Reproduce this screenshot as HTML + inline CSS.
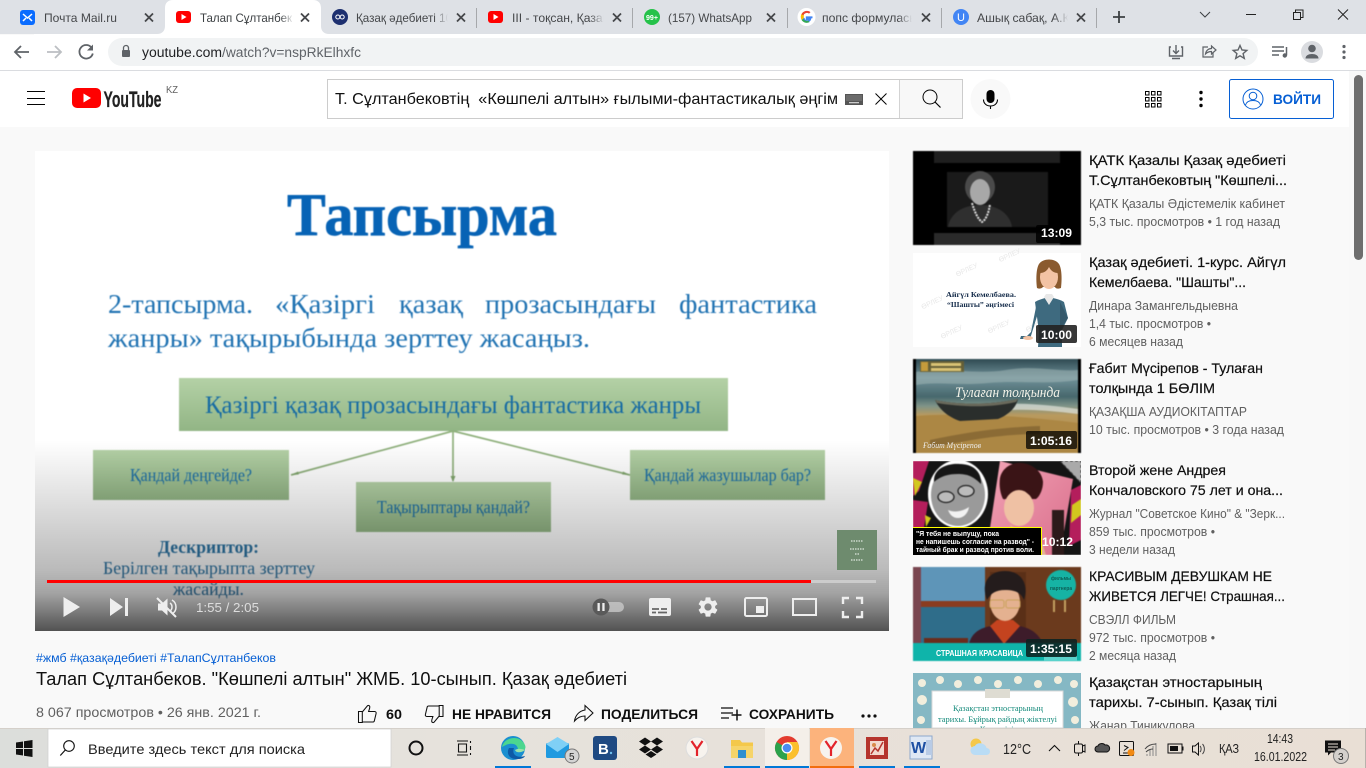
<!DOCTYPE html>
<html lang="ru"><head><meta charset="utf-8"><title>Талап Сұлтанбеков</title>
<style>
html,body{margin:0;padding:0;width:1366px;height:768px;overflow:hidden;background:#f9f9f9}
svg{display:block;position:absolute;left:0;top:0}
text{font-family:"Liberation Sans","Noto Sans CJK SC",sans-serif;white-space:pre}
.s{font-family:"Liberation Serif","Noto Serif CJK SC",serif}
.tab{font-size:12px;fill:#45474a}
.t{font-size:14px;fill:#0f0f0f;stroke:#0f0f0f;stroke-width:.2}
.c{font-size:12.5px;fill:#606060}
.d{font-size:12px;font-weight:bold;fill:#fff}
.b{font-size:14px;font-weight:bold;fill:#0f0f0f}
.sl{fill:#1f72b2}
.x{stroke:#45474a;stroke-width:1.8;fill:none}
.bl{filter:blur(.4px)}
</style></head><body>
<svg width="1366" height="768" viewBox="0 0 1366 768" xmlns="http://www.w3.org/2000/svg">
<defs>
<linearGradient id="vg" x1="0" y1="0" x2="0" y2="1"><stop offset="0" stop-color="#000" stop-opacity="0"/><stop offset=".33" stop-color="#000" stop-opacity=".13"/><stop offset=".68" stop-color="#000" stop-opacity=".27"/><stop offset=".8" stop-color="#000" stop-opacity=".36"/><stop offset="1" stop-color="#000" stop-opacity=".68"/></linearGradient>
<linearGradient id="gb" x1="0" y1="0" x2="0" y2="1"><stop offset="0" stop-color="#b4d1a6"/><stop offset="1" stop-color="#92b585"/></linearGradient>
<linearGradient id="tb" x1="0" y1="0" x2="1" y2="0"><stop offset="0" stop-color="#dcdedb"/><stop offset=".33" stop-color="#e6e2dc"/><stop offset="1" stop-color="#e9dfd5"/></linearGradient>
<linearGradient id="f1" x1="0" x2="1"><stop offset="0" stop-color="#dee1e6" stop-opacity="0"/><stop offset="1" stop-color="#dee1e6"/></linearGradient>
<linearGradient id="f2" x1="0" x2="1"><stop offset="0" stop-color="#fff" stop-opacity="0"/><stop offset="1" stop-color="#fff"/></linearGradient>
<linearGradient id="sky" x1="0" y1="0" x2="0" y2="1"><stop offset="0" stop-color="#2f4a52"/><stop offset=".2" stop-color="#71929a"/><stop offset=".4" stop-color="#47686d"/><stop offset=".5" stop-color="#7f9488"/><stop offset=".6" stop-color="#b99a5e"/><stop offset="1" stop-color="#a67d3c"/></linearGradient>
<linearGradient id="pink" x1="0" y1="0" x2="1" y2="1"><stop offset="0" stop-color="#f2a3b5"/><stop offset="1" stop-color="#d96d8b"/></linearGradient>
<clipPath id="cv"><rect x="35" y="151" width="854" height="480"/></clipPath>
<clipPath id="c4"><rect x="913" y="461" width="168" height="94"/></clipPath>
</defs>

<!-- page -->
<rect width="1366" height="768" fill="#f9f9f9"/>

<!-- chrome tab strip -->
<rect width="1366" height="34" fill="#dee1e6"/>
<path d="M157 34c5 0 8-3 8-8V8c0-5 3-8 8-8h140c5 0 8 3 8 8v18c0 5 3 8 8 8z" fill="#fff"/>
<rect x="34" y="34" width="1332" height="1" fill="#fff"/>

<!-- tab1 -->
<rect x="20" y="10" width="15" height="15" rx="3" fill="#0a6cff"/>
<path d="M23 14l4.500 4 4.500-4M23 21l3-3M32 21l-3-3" stroke="#fff" stroke-width="1.500" fill="none"/>
<text x="44" y="22" class="tab" textLength="73" lengthAdjust="spacingAndGlyphs">Почта Mail.ru</text>
<path class="x" d="M145 13.500l8 8M153 13.500l-8 8"/>

<!-- tab2 -->
<rect x="176" y="11" width="15" height="12" rx="3" fill="#f00"/><path d="M181.500 14v6l5-3z" fill="#fff"/>
<text x="200" y="22" class="tab" textLength="92" lengthAdjust="spacingAndGlyphs" style="fill:#3c4043">Талап Сұлтанбек</text>
<rect x="280" y="8" width="14" height="20" fill="url(#f2)"/>
<path class="x" d="M301 13.500l8 8M309 13.500l-8 8"/>

<!-- tab3 -->
<circle cx="340" cy="17" r="8" fill="#1d2f6f"/><circle cx="337.800" cy="17" r="2" fill="none" stroke="#fff" stroke-width="1"/><circle cx="342.200" cy="17" r="2" fill="none" stroke="#fff" stroke-width="1"/>
<text x="356" y="22" class="tab" textLength="96" lengthAdjust="spacingAndGlyphs">Қазақ әдебиеті 10</text>
<rect x="434" y="8" width="14" height="20" fill="url(#f1)"/><rect x="448" y="8" width="8" height="20" fill="#dee1e6"/>
<path class="x" d="M457 13.500l8 8M465 13.500l-8 8"/>
<rect x="476" y="8" width="1" height="20" fill="#a6a8ab"/>

<!-- tab4 -->
<rect x="488" y="11" width="15" height="12" rx="3" fill="#f00"/><path d="M493.500 14v6l5-3z" fill="#fff"/>
<text x="512" y="22" class="tab" textLength="96" lengthAdjust="spacingAndGlyphs">III - тоқсан, Қазақ</text>
<rect x="590" y="8" width="14" height="20" fill="url(#f1)"/><rect x="604" y="8" width="8" height="20" fill="#dee1e6"/>
<path class="x" d="M613 13.500l8 8M621 13.500l-8 8"/>
<rect x="632" y="8" width="1" height="20" fill="#a6a8ab"/>

<!-- tab5 -->
<circle cx="652" cy="17" r="8" fill="#25c24a"/><text x="646" y="20" style="font-size:7.500px;font-weight:bold;fill:#fff" textLength="12" lengthAdjust="spacingAndGlyphs">99+</text>
<text x="668" y="22" class="tab" textLength="84" lengthAdjust="spacingAndGlyphs">(157) WhatsApp</text>
<path class="x" d="M767 13.500l8 8M775 13.500l-8 8"/>
<rect x="787" y="8" width="1" height="20" fill="#a6a8ab"/>

<!-- tab6 G -->
<circle cx="806.500" cy="17" r="9" fill="#fff"/>
<path d="M812.500 17.300h-5.800v1.900h3.500c-.4 1.300-1.600 2.100-3.100 2.100-1.900 0-3.400-1.500-3.400-3.400" fill="none" stroke="#4285f4" stroke-width="1.800"/>
<path d="M803.800 11.700a5.800 5.800 0 0 0-2.200 8l2.200-1.600" fill="#fbbc05" stroke="none"/>
<path d="M801.500 14.400a5.900 5.900 0 0 1 9-2.300l-1.500 1.500a3.800 3.800 0 0 0-5.700 1.700z" fill="#ea4335"/>
<path d="M801.500 19.800a5.900 5.900 0 0 0 8 2.300l-1.400-1.600a3.800 3.800 0 0 1-4.900-1.600z" fill="#34a853"/>
<text x="822" y="22" class="tab" textLength="96" lengthAdjust="spacingAndGlyphs">попс формуласы</text>
<rect x="898" y="8" width="14" height="20" fill="url(#f1)"/><rect x="912" y="8" width="8" height="20" fill="#dee1e6"/>
<path class="x" d="M922 13.500l8 8M930 13.500l-8 8"/>
<rect x="941" y="8" width="1" height="20" fill="#a6a8ab"/>

<!-- tab7 -->
<circle cx="961" cy="17" r="8" fill="#4285f4"/><text x="957" y="21" style="font-size:11px;fill:#fff">U</text>
<text x="977" y="22" class="tab" textLength="96" lengthAdjust="spacingAndGlyphs">Ашық сабақ, А.Қ.</text>
<rect x="1054" y="8" width="14" height="20" fill="url(#f1)"/><rect x="1068" y="8" width="8" height="20" fill="#dee1e6"/>
<path class="x" d="M1077 13.500l8 8M1085 13.500l-8 8"/>
<rect x="1096" y="8" width="1" height="20" fill="#a6a8ab"/>
<path d="M1119 11v12M1113 17h12" stroke="#3c4043" stroke-width="1.800" fill="none"/>

<!-- window controls -->
<path d="M1200 12l5 5 5-5" stroke="#3c4043" fill="none"/>
<path d="M1246 14.500h10" stroke="#222" stroke-width="1"/>
<path d="M1293.500 12.500h7v7h-7zM1295.500 12.500v-2.500h7.500v7.500h-2.500" stroke="#222" fill="none"/>
<path d="M1338 9.500l10 10M1348 9.500l-10 10" stroke="#222" fill="none"/>

<!-- toolbar -->
<rect y="35" width="1366" height="35" fill="#fff"/>
<rect y="70" width="1366" height="1" fill="#dadce0"/>
<rect x="108" y="38" width="1150" height="28" rx="14" fill="#f1f3f4"/>
<path d="M29 52H15.500M21 46l-6 6 6 6" stroke="#5f6368" stroke-width="1.800" fill="none"/>
<path d="M47 52h13.500M55 46l6 6-6 6" stroke="#bcbfc3" stroke-width="1.800" fill="none"/>
<path d="M91.500 47.500a6.800 6.800 0 1 0 1.300 6" stroke="#5f6368" stroke-width="1.800" fill="none"/><path d="M93 44.500v6h-6z" fill="#5f6368"/>
<path d="M123.500 50v-2a2.500 2.500 0 0 1 5 0v2" stroke="#5f6368" stroke-width="1.300" fill="none"/><rect x="122" y="50" width="8" height="7" rx="1" fill="#5f6368"/>
<text x="142" y="57" style="font-size:13.500px;fill:#202124" textLength="80" lengthAdjust="spacingAndGlyphs">youtube.com</text>
<text x="222" y="57" style="font-size:13.500px;fill:#5f6368" textLength="139" lengthAdjust="spacingAndGlyphs">/watch?v=nspRkElhxfc</text>
<!-- right toolbar icons -->
<path d="M1171 47h-1.500v9h13v-9h-1.500M1176 45v8M1173 50.500l3 3 3-3M1172 58.500h8" stroke="#5f6368" stroke-width="1.400" fill="none"/>
<path d="M1208 47h-5v10h10v-4M1205.500 54c.5-3.500 3-5.500 6-5.500v-2.500l4.500 4-4.500 4v-2.500c-2.500 0-4.500 1-6 2.500z" stroke="#5f6368" stroke-width="1.200" fill="none"/>
<path d="M1240 45.500l2 4.500 4.800.4-3.700 3.200 1.200 4.800-4.300-2.600-4.300 2.600 1.200-4.800-3.700-3.200 4.800-.4z" stroke="#5f6368" stroke-width="1.400" fill="none"/>
<path d="M1272 47h12M1272 51h12M1272 55h7" stroke="#5f6368" stroke-width="1.400"/><path d="M1286.500 47v8.500" stroke="#5f6368" stroke-width="1.500"/><circle cx="1284.800" cy="55.500" r="2.200" fill="#5f6368"/>
<circle cx="1312" cy="52" r="11" fill="#dadce0"/><circle cx="1312" cy="48.500" r="3.800" fill="#5f6368"/><path d="M1305.500 58.500c0-3 3-4.500 6.500-4.500s6.500 1.500 6.500 4.500z" fill="#5f6368"/>
<circle cx="1344" cy="46.500" r="1.600" fill="#5f6368"/><circle cx="1344" cy="52" r="1.600" fill="#5f6368"/><circle cx="1344" cy="57.500" r="1.600" fill="#5f6368"/>

<!-- yt header -->
<rect y="71" width="1349" height="56" fill="#fff"/>
<path d="M27 91.500h18M27 98.500h18M27 104.500h18" stroke="#030303" stroke-width="1"/>
<rect x="72" y="88" width="29" height="20" rx="5" fill="#f00"/><path d="M83.500 93.500v9l7.500-4.500z" fill="#fff"/>
<text x="103.500" y="107" style="font-size:22px;font-weight:bold;fill:#212121;stroke:#212121;stroke-width:.2" textLength="58" lengthAdjust="spacingAndGlyphs">YouTube</text>
<text x="166" y="93" style="font-size:10px;fill:#606060" textLength="12" lengthAdjust="spacingAndGlyphs">KZ</text>

<!-- search -->
<rect x="327.500" y="79.500" width="635" height="39" fill="#fff" stroke="#ccc"/>
<rect x="900" y="80" width="62" height="38" fill="#f8f8f8"/><rect x="899" y="80" width="1" height="38" fill="#d3d3d3"/>
<text x="335" y="104" style="font-size:16px;fill:#111" textLength="503" lengthAdjust="spacingAndGlyphs">Т. Сұлтанбековтің  «Көшпелі алтын» ғылыми-фантастикалық әңгім</text>
<rect x="845" y="94" width="18" height="11" fill="#555"/><path d="M846.500 96h15M846.500 98h15M846.500 100h15" stroke="#ccc" stroke-width=".8" stroke-dasharray="1 1"/><rect x="849" y="102" width="10" height="1.300" fill="#ccc"/>
<path d="M875.500 93.500l11 11M886.500 93.500l-11 11" stroke="#030303" stroke-width="1"/>
<circle cx="930" cy="97" r="7" fill="none" stroke="#030303" stroke-width="1"/><path d="M935 102l5.500 5.500" stroke="#030303" stroke-width="1.200"/>
<circle cx="990.500" cy="99" r="20" fill="#f9f9f9"/>
<rect x="986.500" y="90" width="8" height="13" rx="4" fill="#030303"/><path d="M983.500 99.500c0 4 3 6.500 7 6.500s7-2.500 7-6.500M990.500 106v3" stroke="#030303" stroke-width="1.100" fill="none"/>

<!-- grid / dots / login -->
<g fill="none" stroke="#030303" stroke-width="1"><path d="M1145.500 91.500h3.500v3.500h-3.500zM1151.500 91.500h3.500v3.500h-3.500zM1157.500 91.500h3.500v3.500h-3.500zM1145.500 97.500h3.500v3.500h-3.500zM1151.500 97.500h3.500v3.500h-3.500zM1157.500 97.500h3.500v3.500h-3.500zM1145.500 103.500h3.500v3.500h-3.500zM1151.500 103.500h3.500v3.500h-3.500zM1157.500 103.500h3.500v3.500h-3.500z"/></g>
<circle cx="1201" cy="92.500" r="1.700" fill="#030303"/><circle cx="1201" cy="99" r="1.700" fill="#030303"/><circle cx="1201" cy="105.500" r="1.700" fill="#030303"/>
<rect x="1229.500" y="79.500" width="104" height="39" rx="2" fill="#fff" stroke="#065fd4"/>
<circle cx="1253" cy="99" r="10" fill="none" stroke="#065fd4" stroke-width="1"/><circle cx="1253" cy="96" r="3.800" fill="none" stroke="#065fd4"/><path d="M1245.500 105c1-3.500 4-4.500 7.500-4.500s6.500 1 7.500 4.500" fill="none" stroke="#065fd4"/>
<text x="1273" y="104" style="font-size:14px;font-weight:bold;fill:#065fd4" textLength="48" lengthAdjust="spacingAndGlyphs">ВОЙТИ</text>

<!-- scrollbar -->
<rect x="1349" y="71" width="17" height="657" fill="#f8f8f8"/>
<rect x="1354" y="75" width="9" height="185" rx="4.500" fill="#6e6e6e"/>

<!-- video -->
<g clip-path="url(#cv)">
<rect x="35" y="151" width="854" height="480" fill="#fff"/>
<g class="bl">
<text class="s" x="287" y="235" style="font-size:60px;font-weight:bold;fill:#0763b5;stroke:#0763b5;stroke-width:.7" textLength="270" lengthAdjust="spacingAndGlyphs">Тапсырма</text>
<text class="s sl" style="font-size:27px" x="108" y="313" textLength="145" lengthAdjust="spacingAndGlyphs">2-тапсырма.</text>
<text class="s sl" style="font-size:27px" x="275" y="313" textLength="100" lengthAdjust="spacingAndGlyphs">«Қазіргі</text>
<text class="s sl" style="font-size:27px" x="399" y="313" textLength="64" lengthAdjust="spacingAndGlyphs">қазақ</text>
<text class="s sl" style="font-size:27px" x="485" y="313" textLength="171" lengthAdjust="spacingAndGlyphs">прозасындағы</text>
<text class="s sl" style="font-size:27px" x="679" y="313" textLength="138" lengthAdjust="spacingAndGlyphs">фантастика</text>
<text class="s sl" style="font-size:27px" x="108" y="347" textLength="482" lengthAdjust="spacingAndGlyphs">жанры» тақырыбында зерттеу жасаңыз.</text>
<rect x="179" y="378" width="549" height="53" fill="url(#gb)"/>
<text class="s" x="205" y="413" style="font-size:25px;fill:#166ba3" textLength="496" lengthAdjust="spacingAndGlyphs">Қазіргі қазақ прозасындағы фантастика жанры</text>
<path d="M453 431L291 475M453 431V481M453 431L630 475" stroke="#8fb07c" stroke-width="1.700" fill="none"/>
<path d="M291 475l7-3.500.8 3zM453 482l-2.500-6h5zM630 475l-7-3.500-.8 3z" fill="#7fa46c"/>
<rect x="93" y="450" width="196" height="50" fill="url(#gb)"/>
<rect x="356" y="482" width="195" height="50" fill="url(#gb)"/>
<rect x="630" y="450" width="195" height="50" fill="url(#gb)"/>
<text class="s" x="130" y="481" style="font-size:18px;fill:#1b6ea6" textLength="122" lengthAdjust="spacingAndGlyphs">Қандай деңгейде?</text>
<text class="s" x="377" y="513" style="font-size:18px;fill:#1b6ea6" textLength="153" lengthAdjust="spacingAndGlyphs">Тақырыптары қандай?</text>
<text class="s" x="644" y="481" style="font-size:18px;fill:#1b6ea6" textLength="167" lengthAdjust="spacingAndGlyphs">Қандай жазушылар бар?</text>
<text class="s" x="158" y="553" style="font-size:18px;font-weight:bold;fill:#2b74a4" textLength="101" lengthAdjust="spacingAndGlyphs">Дескриптор:</text>
<text class="s" x="103" y="574" style="font-size:18px;fill:#2b74a4" textLength="212" lengthAdjust="spacingAndGlyphs">Берілген тақырыпта зерттеу</text>
<text class="s" x="173" y="595" style="font-size:18px;fill:#2b74a4" textLength="71" lengthAdjust="spacingAndGlyphs">жасайды.</text>
</g>
<!-- gradient -->
<rect x="35" y="440" width="854" height="191" fill="url(#vg)"/>
<!-- watermark -->
<rect x="837" y="530" width="40" height="40" fill="#6e8b6e"/>
<path d="M851 541h12M850 549h14M855 554h4M851 560h12" stroke="#dfe8df" stroke-width="1.200" stroke-dasharray="1.500 1" fill="none"/>
<!-- progress -->
<rect x="47" y="580" width="829" height="3" fill="#ccc"/><rect x="47" y="580" width="764" height="3" fill="#f00"/>
<!-- controls -->
<path d="M63.500 597v20l16.500-10z" fill="#eee"/>
<path d="M110 598v18l13-9zM125 598h3v18h-3z" fill="#eee"/>
<path d="M158 603.500v7h4l5.500 5v-17l-5.500 5z" fill="#eee"/><path d="M170 603c1.500 1 2 2.500 2 4s-.5 3-2 4M172 600c2.500 1.500 4 4 4 7s-1.500 5.500-4 7" stroke="#eee" stroke-width="1.500" fill="none"/><path d="M157 598l19 19" stroke="#eee" stroke-width="2"/>
<text x="196" y="612" style="font-size:13px;fill:#ddd" textLength="63" lengthAdjust="spacingAndGlyphs">1:55 / 2:05</text>
<rect x="594" y="602" width="30" height="10" rx="5" fill="#c8c8c8" opacity=".8"/>
<circle cx="601" cy="607" r="8.500" fill="#5a5a5a"/><rect x="597.500" y="603" width="2.300" height="8" fill="#eee"/><rect x="602.300" y="603" width="2.300" height="8" fill="#eee"/>
<rect x="649" y="598" width="22" height="18" rx="2" fill="#eee"/><path d="M652 609h7M661 609h6M652 612.500h4M658 612.500h9" stroke="#666" stroke-width="1.800"/>
<g transform="translate(696 595)"><path fill="#eee" d="M19.140 12.940c.04-.3.060-.61.060-.94 0-.32-.02-.64-.07-.94l2.030-1.580c.18-.14.230-.41.120-.61l-1.920-3.320c-.12-.22-.37-.29-.59-.22l-2.390.96c-.5-.38-1.030-.7-1.620-.94l-.36-2.540c-.04-.24-.24-.41-.48-.41h-3.840c-.24 0-.43.170-.47.410l-.36 2.540c-.59.240-1.130.570-1.620.94l-2.390-.96c-.22-.08-.47 0-.59.220L2.740 8.870c-.12.210-.08.470.120.610l2.030 1.580c-.05.3-.09.630-.09.94s.02.640.07.940l-2.030 1.580c-.18.140-.23.410-.12.610l1.920 3.320c.12.220.37.290.59.220l2.390-.96c.5.380 1.030.7 1.620.94l.36 2.540c.05.240.24.410.48.410h3.840c.24 0 .44-.17.47-.41l.36-2.540c.59-.24 1.130-.56 1.620-.94l2.390.96c.22.080.47 0 .59-.22l1.920-3.320c.12-.22.070-.47-.12-.61l-2.010-1.580zM12 15.600c-1.980 0-3.600-1.620-3.600-3.600s1.620-3.600 3.600-3.600 3.600 1.620 3.600 3.600-1.620 3.600-3.600 3.600z"/></g>
<rect x="745" y="598" width="22" height="18" rx="1.500" fill="none" stroke="#eee" stroke-width="2"/><rect x="756" y="606" width="8" height="7" fill="#eee"/>
<rect x="793" y="599" width="23" height="16" fill="none" stroke="#eee" stroke-width="2"/>
<path d="M843 604v-6h6M856 598h6v6M862 611v6h-6M849 617h-6v-6" stroke="#eee" stroke-width="2.400" fill="none"/>
</g>

<!-- below video -->
<text x="36" y="662" style="font-size:12px;fill:#065fd4" textLength="240" lengthAdjust="spacingAndGlyphs">#жмб #қазақәдебиеті #ТалапСұлтанбеков</text>
<text x="36" y="685" style="font-size:18px;fill:#0f0f0f" textLength="591" lengthAdjust="spacingAndGlyphs">Талап Сұлтанбеков. "Көшпелі алтын" ЖМБ. 10-сынып. Қазақ әдебиеті</text>
<text x="36" y="717" style="font-size:14px;fill:#606060" textLength="225" lengthAdjust="spacingAndGlyphs">8 067 просмотров • 26 янв. 2021 г.</text>
<path d="M358.500 711.500h3.800v11h-3.800zM362.300 712l5-6c.5-1 2.500-.8 2.500 1 0 1.500-.8 3-1.200 4.500h6c1.200 0 1.800 1 1.500 2l-1.800 7.500c-.2.800-.8 1-1.500 1h-10.500z" fill="none" stroke="#0f0f0f" stroke-width="1.050"/>
<text x="386" y="719" class="b" textLength="16" lengthAdjust="spacingAndGlyphs">60</text>
<path d="M443 716.500h-3.800v-11h3.800zM439.200 716l-5 6c-.5 1-2.500.8-2.500-1 0-1.500.8-3 1.200-4.500h-6c-1.200 0-1.800-1-1.500-2l1.800-7.500c.2-.8.8-1 1.500-1h10.500z" fill="none" stroke="#0f0f0f" stroke-width="1.050"/>
<text x="452" y="719" class="b" textLength="99" lengthAdjust="spacingAndGlyphs">НЕ НРАВИТСЯ</text>
<path d="M585 705.500l8 7.500-8 7.500v-4.500c-4 0-7.500 1.500-10.500 5 .8-5.500 4.500-10 10.500-11z" fill="none" stroke="#0f0f0f" stroke-width="1.050"/>
<text x="601" y="719" class="b" textLength="97" lengthAdjust="spacingAndGlyphs">ПОДЕЛИТЬСЯ</text>
<path d="M721 708h12M721 713h12M721 718h8" stroke="#0f0f0f" stroke-width="1.200"/><path d="M737 709.500v11M731.500 715h10" stroke="#0f0f0f" stroke-width="1.500"/>
<text x="749" y="719" class="b" textLength="85" lengthAdjust="spacingAndGlyphs">СОХРАНИТЬ</text>
<circle cx="863" cy="716" r="1.600" fill="#0f0f0f"/><circle cx="869" cy="716" r="1.600" fill="#0f0f0f"/><circle cx="875" cy="716" r="1.600" fill="#0f0f0f"/>

<!-- thumbnails -->
<!-- 1 -->
<g class="bl">
<rect x="913" y="151" width="168" height="94" fill="#000"/>
<rect x="934" y="151" width="126" height="12" fill="#1f1f1f"/><rect x="934" y="233" width="126" height="12" fill="#2a2a2a"/>
<rect x="947" y="172" width="101" height="55" fill="#1a1a1a"/>
<ellipse cx="980" cy="187" rx="15" ry="16" fill="#4a4a4a"/>
<ellipse cx="980" cy="192" rx="10" ry="13" fill="#a8a8a8"/>
<path d="M948 227c2-13 14-22 32-22s30 9 32 22z" fill="#2f2f2f"/>
<path d="M972 203c3 10 6 16 10 19 4-2 7-10 8-18" fill="none" stroke="#e0e0e0" stroke-width="2" stroke-dasharray="2 1"/>
</g>
<rect x="1036" y="225" width="41" height="18" rx="2" fill="#000" opacity=".85"/>
<text x="1041" y="237" class="d" textLength="31" lengthAdjust="spacingAndGlyphs">13:09</text>
<!-- 2 -->
<rect x="913" y="253" width="168" height="94" fill="#fff"/>
<g transform="rotate(-25 990 300)"><text x="925" y="280" style="font-size:7px;fill:#e8e8e8">ӨРЛЕУ</text><text x="970" y="265" style="font-size:7px;fill:#e8e8e8">ӨРЛЕУ</text><text x="1015" y="270" style="font-size:7px;fill:#e8e8e8">ӨРЛЕУ</text><text x="930" y="315" style="font-size:7px;fill:#e8e8e8">ӨРЛЕУ</text><text x="975" y="330" style="font-size:7px;fill:#e8e8e8">ӨРЛЕУ</text><text x="1010" y="345" style="font-size:7px;fill:#e8e8e8">ӨРЛЕУ</text></g>
<text class="s" x="946" y="297" style="font-size:7.500px;font-weight:bold;fill:#152c4a" textLength="70" lengthAdjust="spacingAndGlyphs">Айгүл Кемелбаева.</text>
<text class="s" x="947" y="307" style="font-size:7.500px;font-weight:bold;fill:#152c4a" textLength="67" lengthAdjust="spacingAndGlyphs">“Шашты” әңгімесі</text>
<path d="M1039 264c4-6 16-6 20 0 3 5 3 16 2 24-3 1-5 1-6-1h-12c-2 2-4 2-6 1-1-8-1-19 2-24z" fill="#8a5a2e"/>
<ellipse cx="1049" cy="277" rx="9" ry="12" fill="#f3c3a4"/>
<path d="M1040 273c4 0 7-2 9-6 2 4 5 6 9 6v-7c-4-5-14-5-18 0z" fill="#8a5a2e"/>
<path d="M1038 347l1-15-4-30c3-2 7-3 10-4l4 5 4-5c4 1 8 2 11 4l4 16-6 12v17z" fill="#3e6a7f"/>
<path d="M1044 297l5 8 5-8-2-3h-6z" fill="#e8e8e8"/>
<path d="M1037 302l-6 30-4 4h-6l-1 3h10l8-26z" fill="#3e6a7f"/><ellipse cx="1028" cy="338" rx="5" ry="2" fill="#f3c3a4"/>
<path d="M1060 302l8 16-8 12z" fill="#35596b"/>
<rect x="1036" y="325" width="41" height="18" rx="2" fill="#222" opacity=".9"/>
<text x="1041" y="339" class="d" textLength="31" lengthAdjust="spacingAndGlyphs">10:00</text>
<!-- 3 -->
<g class="bl">
<rect x="913" y="359" width="168" height="94" fill="url(#sky)"/>
<rect x="913" y="359" width="3" height="94" fill="#000"/><rect x="1078" y="359" width="3" height="94" fill="#000"/>
<path d="M916 372c30-5 60 3 90-2s50 2 72 0v10c-30 5-60 0-90 3s-50-2-72 2z" fill="#9fb4b4" opacity=".55"/>
<path d="M1010 404c20-1 45 2 68 5v5c-25-3-45-5-70-4z" fill="#dfe3dc" opacity=".7"/>
<path d="M916 416c40-3 100-1 162 7v30H916z" fill="#ac8744"/>
<path d="M930 440c30-6 60-12 110-14v8c-40 0-70 6-110 14z" fill="#7d5f2f" opacity=".7"/>
<path d="M935 400c25 5 55 5 83-1-2 9-10 16-20 20l-38 2c-12-4-21-12-25-21z" fill="#2a2e2c"/>
<path d="M935 400c25 5 55 5 83-1l-2 3c-25 6-55 5-79 1z" fill="#6a6a5c"/>
<rect x="920" y="361" width="44" height="11" fill="#6b5f2e" opacity=".85"/>
<rect x="921" y="362" width="7" height="9" fill="#c49b3b"/><rect x="931" y="363" width="30" height="3" fill="#d9c274"/><rect x="931" y="368" width="30" height="3" fill="#d9c274"/>
</g>
<text class="s" x="955" y="397" style="font-size:15px;font-style:italic;fill:#f2f2e8" textLength="105" lengthAdjust="spacingAndGlyphs">Тулаған толқында</text>
<text class="s" x="923" y="448" style="font-size:8.500px;font-style:italic;fill:#eee" textLength="58" lengthAdjust="spacingAndGlyphs">Ғабит Мүсірепов</text>
<rect x="1026" y="431" width="51" height="18" rx="2" fill="#000" opacity=".75"/>
<text x="1030" y="445" class="d" textLength="42" lengthAdjust="spacingAndGlyphs">1:05:16</text>
<!-- 4 -->
<g clip-path="url(#c4)">
<g class="bl">
<rect x="913" y="461" width="168" height="94" fill="#141414"/>
<path d="M913 461h16l-10 30-6 5zM1071 490l10-5v55l-12 6zM913 500l15 2-4 26-11 1z" fill="#b41e5c"/>
<path d="M1072 505l9-6v16l-10 8zM913 478l9 4-7 14zM925 515l6 3-5 9z" fill="#d2c81e"/>
<path d="M1000 461l73 18-13 76h-40l-30-27z" fill="url(#pink)"/>
<path d="M1060 461h21v22z" fill="#aaa"/><path d="M1060 461h21v22z" fill="none" stroke="#333" stroke-dasharray="3 2"/>
<ellipse cx="958" cy="494" rx="30" ry="34" fill="#fff"/>
<ellipse cx="958" cy="495" rx="27" ry="31" fill="#9a9a9a"/>
<path d="M934 482c-1-14 14-19 26-18 12 0 22 7 21 20-8-8-14-10-23-10-10 0-17 2-24 8z" fill="#161616"/>
<ellipse cx="946" cy="497" rx="8" ry="5.500" fill="#bbb" stroke="#222" stroke-width="1.300"/><ellipse cx="966" cy="491" rx="8" ry="5.500" fill="#bbb" stroke="#222" stroke-width="1.300"/>
<path d="M948 510c7 3 15 1 21-3-1 7-6 11-11 11s-8-3-10-8z" fill="#f2f2f2"/>
<path d="M1000 478c2-10 12-16 22-15 10 1 20 8 21 19 0 7-3 14-7 17h-33c-3-6-4-14-3-21z" fill="#3a1416"/>
<ellipse cx="1019" cy="508" rx="15" ry="18" fill="#efc1a4"/>
<path d="M1004 500c5-6 10-10 16-14 4 5 9 9 14 12v-8c-8-8-24-8-30 0z" fill="#3a1416"/>
<path d="M1010 524c8 8 20 12 28 6l8 25h-30z" fill="#e5b296"/>
<rect x="1052" y="510" width="12" height="45" fill="#2c1a1a"/>
</g>
<rect x="913" y="527" width="129" height="28" fill="#000"/><rect x="913" y="527" width="129" height="1" fill="#ff0"/><rect x="1041" y="527" width="1" height="28" fill="#ff0"/>
</g>
<text x="916" y="536" style="font-size:7.500px;font-weight:bold;fill:#fff" textLength="83" lengthAdjust="spacingAndGlyphs">"Я тебя не выпущу, пока</text>
<text x="916" y="544" style="font-size:7.500px;font-weight:bold;fill:#fff" textLength="118" lengthAdjust="spacingAndGlyphs">не напишешь согласие на развод" -</text>
<text x="916" y="552" style="font-size:7.500px;font-weight:bold;fill:#fff" textLength="118" lengthAdjust="spacingAndGlyphs">тайный брак и развод против воли.</text>
<text x="1042" y="546" class="d" textLength="31" lengthAdjust="spacingAndGlyphs">10:12</text>
<!-- 5 -->
<g class="bl">
<rect x="913" y="567" width="168" height="94" fill="#5a2e1c"/>
<rect x="921" y="567" width="66" height="38" fill="#5e95b8"/><rect x="921" y="601" width="66" height="6" fill="#8a3c20"/><rect x="921" y="607" width="66" height="37" fill="#2f6d8a"/>
<rect x="985" y="567" width="96" height="77" fill="#6b3a1d"/><rect x="990" y="572" width="36" height="70" fill="#5a2f17"/>
<path d="M913 567h8v77h-8z" fill="#7a4650"/>
<circle cx="1061" cy="585" r="15" fill="#16b3a4"/>
<path d="M1054 600v12M1065 600v12" stroke="#c2a060" stroke-width="2"/>
<path d="M969 644c2-10 10-16 22-18h28c12 2 20 8 24 18z" fill="#3d1c2a"/>
<path d="M990 626l14 18 16-18-7-6h-16z" fill="#c4431f"/>
<ellipse cx="1005" cy="602" rx="15" ry="19" fill="#e4b190"/>
<path d="M987 600c-6-15 0-29 18-29 17 0 24 14 19 29-3-7-8-10-19-10-9 0-14 3-18 10z" fill="#241c1c"/>
<rect x="990" y="600" width="14" height="8" rx="2" fill="none" stroke="#caa25c"/><rect x="1006" y="600" width="14" height="8" rx="2" fill="none" stroke="#caa25c"/>
<rect x="924" y="638" width="44" height="6" fill="#6b2c1c"/>
<rect x="913" y="643" width="168" height="18" fill="#0fb4aa"/>
</g>
<text x="1051" y="580" style="font-size:5.500px;font-weight:bold;fill:#0d5f56" textLength="20" lengthAdjust="spacingAndGlyphs">фильмы</text><text x="1050" y="590" style="font-size:5.500px;font-weight:bold;fill:#0d5f56" textLength="22" lengthAdjust="spacingAndGlyphs">партнера</text>
<text x="936" y="656" style="font-size:8.500px;font-weight:bold;fill:#fff" textLength="87" lengthAdjust="spacingAndGlyphs">СТРАШНАЯ КРАСАВИЦА</text>
<rect x="1044" y="656" width="33" height="5" fill="#5bd3cc"/>
<rect x="1026" y="639" width="51" height="18" rx="2" fill="#0c2422" opacity=".9"/>
<text x="1030" y="653" class="d" textLength="42" lengthAdjust="spacingAndGlyphs">1:35:15</text>
<!-- 6 -->
<rect x="913" y="673" width="168" height="55" fill="#85b8c4"/>
<g fill="#f2eedd"><circle cx="922" cy="683" r="4"/><circle cx="940" cy="680" r="4"/><circle cx="958" cy="684" r="4"/><circle cx="978" cy="680" r="4"/><circle cx="998" cy="684" r="4"/><circle cx="1018" cy="680" r="4"/><circle cx="1038" cy="684" r="4"/><circle cx="1058" cy="680" r="4"/><circle cx="1074" cy="684" r="4"/><circle cx="922" cy="700" r="5"/><circle cx="1073" cy="702" r="5"/><circle cx="921" cy="720" r="4"/><circle cx="1075" cy="720" r="4"/></g>
<rect x="932" y="691" width="131" height="37" fill="#fff" stroke="#d9d9d9"/>
<rect x="985" y="689" width="25" height="9" fill="#dedcd2"/>
<text class="s" x="953" y="711" style="font-size:8px;fill:#138a7a" textLength="90" lengthAdjust="spacingAndGlyphs">Қазақстан этностарының</text>
<text class="s" x="938" y="722" style="font-size:8px;fill:#138a7a" textLength="119" lengthAdjust="spacingAndGlyphs">тарихы. Бұйрық райдың жіктелуі</text>
<text class="s" x="980" y="732" style="font-size:8px;fill:#138a7a">Қазақ тілі</text>

<!-- sidebar text -->
<text x="1089" y="165" class="t" textLength="197" lengthAdjust="spacingAndGlyphs">ҚАТК Қазалы Қазақ әдебиеті</text>
<text x="1089" y="185" class="t" textLength="198" lengthAdjust="spacingAndGlyphs">Т.Сұлтанбековтың "Көшпелі...</text>
<text x="1089" y="208" class="c" textLength="196" lengthAdjust="spacingAndGlyphs">ҚАТК Қазалы Әдістемелік кабинет</text>
<text x="1089" y="226" class="c" textLength="191" lengthAdjust="spacingAndGlyphs">5,3 тыс. просмотров • 1 год назад</text>

<text x="1089" y="267" class="t" textLength="197" lengthAdjust="spacingAndGlyphs">Қазақ әдебиеті. 1-курс. Айгүл</text>
<text x="1089" y="287" class="t" textLength="157" lengthAdjust="spacingAndGlyphs">Кемелбаева. "Шашты"...</text>
<text x="1089" y="310" class="c" textLength="149" lengthAdjust="spacingAndGlyphs">Динара Замангельдыевна</text>
<text x="1089" y="328" class="c" textLength="122" lengthAdjust="spacingAndGlyphs">1,4 тыс. просмотров •</text>
<text x="1089" y="346" class="c" textLength="94" lengthAdjust="spacingAndGlyphs">6 месяцев назад</text>

<text x="1089" y="373" class="t" textLength="174" lengthAdjust="spacingAndGlyphs">Ғабит Мүсірепов - Тулаған</text>
<text x="1089" y="393" class="t" textLength="126" lengthAdjust="spacingAndGlyphs">толқында 1 БӨЛІМ</text>
<text x="1089" y="416" class="c" textLength="158" lengthAdjust="spacingAndGlyphs">ҚАЗАҚША АУДИОКІТАПТАР</text>
<text x="1089" y="434" class="c" textLength="195" lengthAdjust="spacingAndGlyphs">10 тыс. просмотров • 3 года назад</text>

<text x="1089" y="475" class="t" textLength="137" lengthAdjust="spacingAndGlyphs">Второй жене Андрея</text>
<text x="1089" y="495" class="t" textLength="194" lengthAdjust="spacingAndGlyphs">Кончаловского 75 лет и она...</text>
<text x="1089" y="518" class="c" textLength="196" lengthAdjust="spacingAndGlyphs">Журнал "Советское Кино" &amp; "Зерк...</text>
<text x="1089" y="536" class="c" textLength="126" lengthAdjust="spacingAndGlyphs">859 тыс. просмотров •</text>
<text x="1089" y="554" class="c" textLength="86" lengthAdjust="spacingAndGlyphs">3 недели назад</text>

<text x="1089" y="581" class="t" textLength="183" lengthAdjust="spacingAndGlyphs">КРАСИВЫМ ДЕВУШКАМ НЕ</text>
<text x="1089" y="601" class="t" textLength="196" lengthAdjust="spacingAndGlyphs">ЖИВЕТСЯ ЛЕГЧЕ! Страшная...</text>
<text x="1089" y="624" class="c" textLength="87" lengthAdjust="spacingAndGlyphs">СВЭЛЛ ФИЛЬМ</text>
<text x="1089" y="642" class="c" textLength="126" lengthAdjust="spacingAndGlyphs">972 тыс. просмотров •</text>
<text x="1089" y="660" class="c" textLength="87" lengthAdjust="spacingAndGlyphs">2 месяца назад</text>

<text x="1089" y="687" class="t" textLength="173" lengthAdjust="spacingAndGlyphs">Қазақстан этностарының</text>
<text x="1089" y="707" class="t" textLength="188" lengthAdjust="spacingAndGlyphs">тарихы. 7-сынып. Қазақ тілі</text>
<text x="1089" y="730" class="c" textLength="106" lengthAdjust="spacingAndGlyphs">Жанар Тиникулова</text>

<!-- taskbar -->
<rect y="728" width="1366" height="40" fill="url(#tb)"/>
<rect y="728" width="1366" height="1" fill="#d5d0ca"/>
<path d="M16 742.500l7-1v6.500h-7zM24 741.300l8.500-1.300v8h-8.500zM16 749h7v6.500l-7-1zM24 749h8.500v8l-8.500-1.300z" fill="#111"/>
<rect x="48" y="729" width="343" height="38" fill="#fff" stroke="#cfcfcf" stroke-width=".7"/>
<circle cx="69" cy="746" r="5.300" fill="none" stroke="#111" stroke-width="1.100"/><path d="M65.300 750l-5 5.500" stroke="#111" stroke-width="1.200"/>
<text x="88" y="754" style="font-size:14px;fill:#222" textLength="217" lengthAdjust="spacingAndGlyphs">Введите здесь текст для поиска</text>
<circle cx="416" cy="748" r="6.500" fill="none" stroke="#111" stroke-width="2"/>
<path d="M457 741h11M457 755h11M458.500 744h8v8h-8zM470.500 741v2M470.500 746v4M470.500 753v2" stroke="#111" stroke-width="1.100" fill="none"/>
<!-- edge -->
<circle cx="513" cy="748" r="12" fill="#1a8fd0"/>
<path d="M502 747c2-10 18-13 23-2 2 5-3 7-7 5 0-5-4-7-9-6-3 .5-5 2-7 3z" fill="#4bd68f"/>
<path d="M509 748c-3 5 0 12 9 11 3 0 6-1 7-3-6 2-14 0-11-8z" fill="#0c5aa6"/>
<path d="M515 750c1 3 6 3 10 0-2-1-7-2-10 0z" fill="#9be4a8"/>
<rect x="495" y="766" width="36" height="2" fill="#0078d7"/>
<!-- mail -->
<rect x="546" y="743" width="23" height="15" rx="1.500" fill="#1f9ae0"/><path d="M546 744l11.500 8 11.500-8-11.500-7z" fill="#7fd0f6"/>
<circle cx="572" cy="756" r="7" fill="#d4d4d4" stroke="#777"/><text x="569" y="760" style="font-size:10px;fill:#222">5</text>
<!-- B -->
<rect x="593" y="736" width="24" height="24" rx="3" fill="#1f4a82"/>
<text x="598" y="754" style="font-size:15px;font-weight:bold;fill:#fff">B</text><circle cx="611" cy="753" r="1.200" fill="#6ec0f0"/>
<!-- dropbox -->
<path d="M645 738l6 4-6 4-6-4zM657 738l6 4-6 4-6-4zM645 746l6 4-6 4-6-4zM657 746l6 4-6 4-6-4zM651 751.500l5.500 3.500-5.500 3.500-5.500-3.500z" fill="#111" transform="translate(0 -.5)"/>
<!-- yandex 1 -->
<circle cx="697" cy="748" r="11" fill="#f7f3ee" stroke="#ddd"/><path d="M691.500 741l5.500 8v7M702.500 741l-5.500 8" stroke="#e3232b" stroke-width="2.200" fill="none"/>
<!-- folder -->
<path d="M731 740h9l2 2.500h11v15h-22z" fill="#f4c84a"/><rect x="731" y="746" width="22" height="12" fill="#f6d469"/><rect x="738" y="750" width="8" height="8" fill="#2f8fd0"/>
<rect x="724" y="766" width="36" height="2" fill="#0078d7"/>
<!-- chrome -->
<rect x="765" y="728" width="44" height="40" fill="#f4efe9"/>
<circle cx="787" cy="748" r="12" fill="#e33b2e"/>
<path d="M787 748l-10.400 6a12 12 0 0 1 0-12z" fill="#2ba24c"/>
<path d="M776.600 754a12 12 0 0 0 10.400 6l5.500-12h-11z" fill="#2ba24c"/>
<path d="M787 760a12 12 0 0 0 10.400-18h-10.400z" fill="#fbc02d"/>
<circle cx="787" cy="748" r="5.500" fill="#fff"/><circle cx="787" cy="748" r="4.300" fill="#4a8df0"/>
<rect x="765" y="766" width="44" height="2" fill="#0078d7"/>
<!-- yandex active -->
<rect x="810" y="728" width="44" height="40" fill="#fcb37c"/>
<circle cx="831" cy="748" r="11" fill="#f7f3ee"/><path d="M825.500 741l5.500 8v7M836.500 741l-5.500 8" stroke="#e3232b" stroke-width="2.200" fill="none"/>
<rect x="810" y="766" width="44" height="2" fill="#f26d0f"/>
<!-- ppt -->
<rect x="866" y="737" width="22" height="22" fill="#b5342d"/><rect x="870" y="741" width="14" height="14" fill="#f3d9cf"/><path d="M871 754l4-6 3 3 5-9" stroke="#b5342d" stroke-width="1.500" fill="none"/><circle cx="874" cy="745" r="2" fill="#d98a4a"/>
<rect x="859" y="766" width="36" height="2" fill="#0078d7"/>
<!-- word -->
<rect x="910" y="736" width="22" height="23" fill="#dfe8f4" stroke="#8ea8cc"/><text x="911" y="753" style="font-size:16px;font-weight:bold;fill:#1d4fa3">W</text><rect x="926" y="740" width="6" height="15" fill="#b8cbe6"/>
<rect x="904" y="766" width="36" height="2" fill="#0078d7"/>
<!-- tray -->
<circle cx="976" cy="744" r="5.500" fill="#f4c84a"/>
<path d="M975 755a4.500 4.500 0 0 1 0-9c1-2.500 5-3.500 8-2 2.500 1 3.500 3 3.500 4a3.500 3.500 0 0 1 0 7z" fill="#b9dcf5"/>
<text x="1003" y="754" style="font-size:15px;fill:#222" textLength="28" lengthAdjust="spacingAndGlyphs">12°C</text>
<path d="M1049 751l5.500-5.500 5.500 5.500" stroke="#111" stroke-width="1.100" fill="none"/>
<rect x="1074.500" y="744" width="8" height="9" rx="1.500" fill="none" stroke="#111"/><path d="M1078.500 741v3M1078.500 753v3M1082.500 746l2.500-1v7l-2.500-1" stroke="#111" fill="none"/>
<path d="M1098 752a3 3 0 0 1 0-6c.5-2.500 5-3.500 7-1a3.500 3.500 0 0 1 2 7z" fill="#555" stroke="#111"/>
<rect x="1119.500" y="741.500" width="14" height="14" rx="1" fill="none" stroke="#111"/><path d="M1124 745.500l4 2-4 3M1123 753h6" stroke="#111" fill="none"/><circle cx="1131" cy="752.500" r="3.500" fill="#f28a14"/>
<path d="M1147 754v2M1150 750v6M1153 746v10M1156 743v13" stroke="#888" stroke-width="1"/><path d="M1145 749c3-4 8-5 11-5M1146 752c2-2 5-3 7-3" stroke="#444" fill="none"/>
<rect x="1168" y="744" width="14" height="9" fill="none" stroke="#111"/><rect x="1170" y="746" width="8" height="5" fill="#111"/><rect x="1182" y="746.500" width="1.500" height="4" fill="#111"/>
<path d="M1192.500 746h2.500l3.500-3v12l-3.500-3h-2.500z" fill="none" stroke="#111"/><path d="M1200 746c1.500 1.500 1.500 4.500 0 6M1202.500 744c2.500 3 2.500 7 0 10" stroke="#444" fill="none"/>
<text x="1219" y="753" style="font-size:13px;fill:#222" textLength="20" lengthAdjust="spacingAndGlyphs">ҚАЗ</text>
<text x="1267" y="743" style="font-size:13px;fill:#222" textLength="26" lengthAdjust="spacingAndGlyphs">14:43</text>
<text x="1254" y="761" style="font-size:13px;fill:#222" textLength="53" lengthAdjust="spacingAndGlyphs">16.01.2022</text>
<path d="M1325 740.500h16v12h-10l-3 3v-3h-3z" fill="#111"/><path d="M1328 744h10M1328 747h10M1328 750h7" stroke="#e9dfd5" stroke-width="1"/>
<circle cx="1341" cy="756" r="7.500" fill="#d4d0cc" stroke="#777"/><text x="1338" y="760" style="font-size:10px;fill:#222">3</text>
<rect x="1365" y="728" width="1" height="40" fill="#b8b2ac"/>
</svg>
</body></html>
